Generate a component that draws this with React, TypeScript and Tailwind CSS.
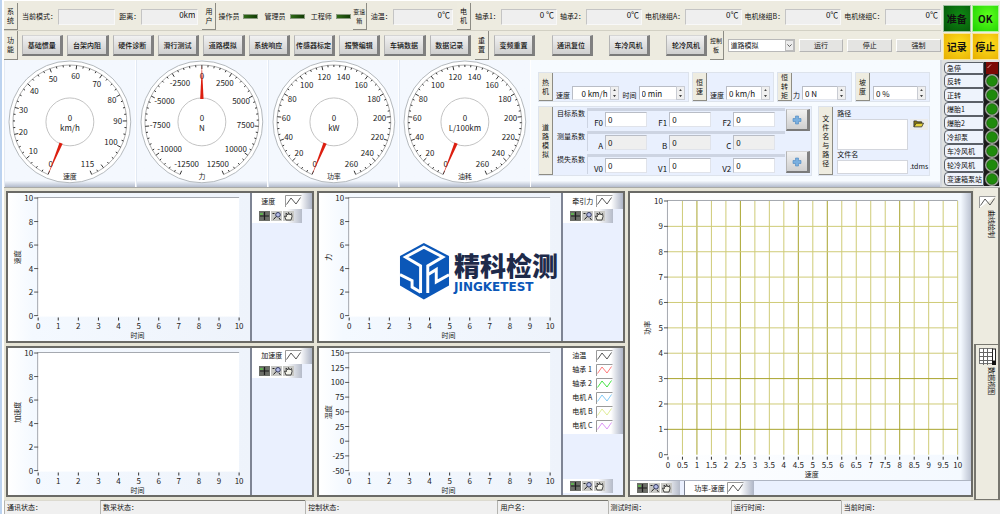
import React, { useState } from "react";
import clsx from "clsx";

const MODES = ["基础惯量", "台架内阻", "硬件诊断", "滑行测试", "道路模拟", "系统响应", "传感器标定", "报警编辑", "车辆数据", "数据记录"];
const RESETS = ["变频重置", "通讯复位", "车冷风机", "轮冷风机"];
const TEMPS = [
  { label: "轴承1：", value: "0 ℃" },
  { label: "轴承2：", value: "0℃" },
  { label: "电机绕组A：", value: "0℃" },
  { label: "电机绕组B：", value: "0℃" },
  { label: "电机绕组C：", value: "0℃" },
];
const SIGNALS = ["急停", "反转", "正转", "爆胎1", "爆胎2", "冷却泵", "车冷风机", "轮冷风机", "变速箱泵站"];
const COEFFS = [
  { title: "目标系数", names: ["F0", "F1", "F2"], readOnly: false },
  { title: "测量系数", names: ["A", "B", "C"], readOnly: true },
  { title: "损失系数", names: ["V0", "V1", "V2"], readOnly: false },
];
const TEMP_LINES = [
  { label: "油温", color: "#444444" },
  { label: "轴承 1", color: "#ff6b6b" },
  { label: "轴承 2", color: "#2fe02f" },
  { label: "电机 A", color: "#74c4f5" },
  { label: "电机 B", color: "#dbe98a" },
  { label: "电机 C", color: "#d98af5" },
];

const range = (from: number, to: number, step: number) => {
  const out: number[] = [];
  for (let v = from; v <= to; v += step) out.push(v);
  return out;
};

function SideLabel({ text, className }: { text: string; className?: string }) {
  return (
    <div
      className={clsx(
        "flex w-[14px] shrink-0 flex-wrap content-center justify-center self-stretch border-r border-b border-[#8d8c84] bg-[#eeece0] text-center whitespace-normal",
        className
      )}
    >
      {text.split("").map((ch, i) => (
        <span key={i}>{ch}</span>
      ))}
    </div>
  );
}

function ReadField({ label, value }: { label: string; value: string }) {
  return (
    <label className="flex flex-auto items-center gap-px">
      {label}
      <input
        readOnly
        value={value}
        className="h-4 w-[50px] min-w-0 flex-auto border border-t-[#c4c4c4] border-r-[#f8f8f8] border-b-[#f8f8f8] border-l-[#c4c4c4] bg-[#efefef] px-0.5 pb-1 text-right text-[8px]"
      />
    </label>
  );
}

function BevelButton({ children, className, ...rest }: React.ButtonHTMLAttributes<HTMLButtonElement>) {
  return (
    <button
      {...rest}
      className={clsx(
        "flex items-center justify-center border-t border-r-3 border-b-2 border-l border-t-[#d5d5d5] border-r-[#808080] border-b-[#7a7a7a] border-l-[#b5b5b5] bg-linear-to-b from-[#f1f1f1] to-[#cfcfcf]",
        className
      )}
    >
      {children}
    </button>
  );
}

function FlatButton({ children }: { children: string }) {
  return (
    <button className="h-[13px] flex-1 border border-t-white border-r-[#b5b5b5] border-b-[#b5b5b5] border-l-white bg-[#e4e4e2]">
      {children}
    </button>
  );
}

function Led({ label }: { label: string }) {
  return (
    <div className="flex items-center gap-1">
      {label}
      <span className="h-[5px] w-[15px] border border-[#8a9a80] bg-linear-to-r from-[#2f6a16] to-[#123c05]" />
    </div>
  );
}

function Tile({ children, className }: { children: string; className: string }) {
  return (
    <button className={clsx("h-[27px] border border-white/60 text-[10px] font-bold text-[#111]", className)}>
      {children}
    </button>
  );
}

function Header() {
  return (
    <header className="flex gap-0.5 bg-[#edebe0] pt-0.5">
      <div className="min-w-0 flex-1">
        <div className="grid h-7 grid-cols-[14px_184fr_14px_136fr_14px_90fr_14px_469fr] items-center border-b border-[#d2d0c4]">
          <SideLabel text="系统" />
          <div className="flex gap-1 px-1">
            <ReadField label="当前模式：" value="" />
            <ReadField label="距离：" value="0km" />
          </div>
          <SideLabel text="用户" />
          <div className="flex justify-between px-0.5">
            <Led label="操作员" />
            <Led label="管理员" />
            <Led label="工程师" />
          </div>
          <SideLabel text="变速箱" className="text-[6px]" />
          <div className="flex px-1">
            <ReadField label="油温：" value="0℃" />
          </div>
          <SideLabel text="电机" />
          <div className="flex gap-[3px] pl-1">
            {TEMPS.map((t) => (
              <ReadField key={t.label} {...t} />
            ))}
          </div>
        </div>
        <div className="grid h-[29px] grid-cols-[14px_456fr_15px_219fr_14px_217fr] items-center">
          <SideLabel text="功能" />
          <div className="grid grid-cols-10 gap-1 px-1">
            {MODES.map((m) => (
              <BevelButton key={m} className="h-[21px] font-medium">
                {m}
              </BevelButton>
            ))}
          </div>
          <SideLabel text="重置" />
          <div className="flex justify-between pr-0.5 pl-1">
            {RESETS.map((m) => (
              <BevelButton key={m} className="h-[21px] w-[41px] font-medium">
                {m}
              </BevelButton>
            ))}
          </div>
          <SideLabel text="控制板" className="text-[6px]" />
          <div className="flex items-center gap-1 pl-1">
            <div className="relative w-[67px]">
              <select aria-label="模式" className="h-[13px] w-full appearance-none border border-[#b9b9b9] bg-white pl-0.5 text-[7px]">
                <option>道路模拟</option>
              </select>
              <span className="pointer-events-none absolute inset-y-px right-px flex w-[9px] items-center justify-center border border-[#bcbcbc] bg-[#ececec]">
                <svg viewBox="0 0 6 4" className="w-[5px]">
                  <path d="M0.5 0.5 L3 3 L5.5 0.5" fill="none" stroke="#444" />
                </svg>
              </span>
            </div>
            <FlatButton>运行</FlatButton>
            <FlatButton>停止</FlatButton>
            <FlatButton>强制</FlatButton>
          </div>
        </div>
      </div>
      <div className="grid w-[57px] grid-cols-2 gap-px pt-0.5 pr-px">
        <Tile className="bg-radial-[at_60%_40%] from-[#108a14] to-[#045508]">准备</Tile>
        <Tile className="bg-radial-[at_60%_40%] from-[#5dff1c] to-[#1fd003]">OK</Tile>
        <Tile className="bg-radial-[at_60%_40%] from-[#ffe01f] to-[#e6ae00]">记录</Tile>
        <Tile className="bg-radial-[at_60%_40%] from-[#ffe01f] to-[#e6ae00]">停止</Tile>
      </div>
    </header>
  );
}

type GaugeProps = { min: number; max: number; step: number; minor: number; labels: number[]; unit: string; name: string };

// The scale runs clockwise through 315 degrees and is open at the bottom.
function Gauge({ min, max, minor, step, labels, unit, name }: GaugeProps) {
  const toRad = (v: number) => ((-157.5 + ((v - min) / (max - min)) * 315) * Math.PI) / 180;
  const needle = (toRad(0) * 180) / Math.PI;
  return (
    <div className="flex-1 border-r border-r-white border-l border-l-[#e2e9f3] bg-linear-to-b from-[#f4f8fe] from-95% to-[#b4bccd]">
      <svg viewBox="0 0 130 127" className="w-full" fontSize="8" textAnchor="middle" fill="#222">
        <circle cx="65" cy="62" r="61" fill="#fff" stroke="#b4b9bd" />
        <g transform="translate(65 62)">
          <path d="M-21.8 52.7 A57 57 0 1 1 21.8 52.7" fill="none" stroke="#8b8b8b" strokeWidth="0.7" />
          {range(min, max, minor).map((v) => {
            const a = toRad(v);
            const inner = v % step === 0 || v === max ? 53 : 55;
            return (
              <line
                key={v}
                x1={Math.sin(a) * 57}
                y1={-Math.cos(a) * 57}
                x2={Math.sin(a) * inner}
                y2={-Math.cos(a) * inner}
                stroke="#333"
                strokeWidth="1"
              />
            );
          })}
          <circle r="24" fill="none" stroke="#c3c3c3" />
          {labels.map((v) => {
            const a = toRad(v);
            const half = String(v).length * 2;
            return (
              <text key={v} x={Math.sin(a) * (52 - half)} y={-Math.cos(a) * 46 + 3}>
                {v}
              </text>
            );
          })}
          <path d="M-1.7 -23 L0 -57 L1.7 -23 Z" fill="#dc1f10" transform={`rotate(${needle})`} />
          <text y="-1">0</text>
          <text y="9">{unit}</text>
          <text y="57" fontSize="7">
            {name}
          </text>
        </g>
      </svg>
    </div>
  );
}

function Spin({ label, value, right }: { label: string; value: string; right?: boolean }) {
  return (
    <div className="flex flex-auto items-end gap-0.5">
      {label && <span>{label}</span>}
      <div className="flex flex-auto">
        <input
          aria-label={label || "坡度"}
          defaultValue={value}
          className={clsx(
            "h-[14px] w-[20px] min-w-0 flex-auto border border-t-[#b9bdc6] border-r-0 border-b-[#e4e7ee] border-l-[#b9bdc6] bg-white px-0.5 text-[8px]",
            right && "text-right"
          )}
        />
        <div className="flex h-[14px] w-[9px] flex-col border border-[#c9ccd3] bg-[#f0f0f0]">
          <button aria-label="增加" className="flex flex-1 items-center justify-center">
            <svg viewBox="0 0 4 3" className="w-[3px]"><path d="M0 3 L2 0 L4 3Z" fill="#444" /></svg>
          </button>
          <button aria-label="减少" className="flex flex-1 items-center justify-center">
            <svg viewBox="0 0 4 3" className="w-[3px]"><path d="M0 0 L2 3 L4 0Z" fill="#444" /></svg>
          </button>
        </div>
      </div>
    </div>
  );
}

function Group({ title, children }: { title: string; children: React.ReactNode }) {
  return (
    <div className="flex min-w-0 border border-[#dde3ec] bg-[#e9f0fe]">
      <SideLabel text={title} />
      {children}
    </div>
  );
}

function PlusButton() {
  return (
    <BevelButton aria-label="添加" className="h-[22px] w-6">
      <svg viewBox="0 0 10 10" className="size-[10px]">
        <path d="M3.5 1 H6.5 V3.5 H9 V6.5 H6.5 V9 H3.5 V6.5 H1 V3.5 H3.5Z" fill="#79afe0" stroke="#4c86c0" strokeWidth="0.6" />
      </svg>
    </BevelButton>
  );
}

function Settings() {
  return (
    <section className="flex w-[411px] flex-col gap-1.5 border-r-2 border-r-[#d3d7dd] bg-linear-to-b from-[#f7fbff] from-95% to-[#b4bccd] pt-3 pr-2.5 pl-[7px]">
      <div className="grid h-7 grid-cols-[151fr_82fr_75fr_75fr] gap-[3px]">
        <Group title="热机">
          <div className="flex flex-1 items-end gap-1 px-[3px] pb-px">
            <Spin label="速度" value="0 km/h" right />
            <Spin label="时间" value="0 min" />
          </div>
        </Group>
        <Group title="恒速">
          <div className="flex flex-1 items-end px-[3px] pb-px">
            <Spin label="速度" value="0 km/h" />
          </div>
        </Group>
        <Group title="恒转矩">
          <div className="flex flex-1 items-end pr-[5px] pb-px pl-px">
            <Spin label="力" value="0 N" />
          </div>
        </Group>
        <Group title="坡度">
          <div className="flex flex-1 items-end pr-[3px] pb-px pl-[3px]">
            <Spin label="" value="0 %" />
          </div>
        </Group>
      </div>
      <div className="grid h-[70px] grid-cols-[275fr_112fr] gap-[6px]">
        <Group title="道路模拟">
          <div className="flex flex-1 flex-col justify-around pl-1">
            {COEFFS.map((row) => (
              <div key={row.title} className="flex">
                <span className="w-[30px] pt-px">{row.title}</span>
                <div className="flex flex-1 justify-between border-t-3 border-l border-t-[#cdd4e2] border-l-[#cdd4e2] py-px pr-2.5 pl-1">
                  {row.names.map((n) => (
                    <label key={n} className="flex items-end gap-0.5 text-[8px]">
                      <span className="w-[11px] text-right">{n}</span>
                      <input
                        defaultValue="0"
                        readOnly={row.readOnly}
                        className={clsx(
                          "h-[15px] w-[42px] border border-t-[#b9bdc6] border-r-[#e0e3ea] border-b-[#e0e3ea] border-l-[#b9bdc6] px-0.5 text-[8px]",
                          row.readOnly ? "bg-[#efefef]" : "bg-white"
                        )}
                      />
                    </label>
                  ))}
                </div>
              </div>
            ))}
          </div>
          <div className="flex flex-col justify-between px-px py-0.5">
            <PlusButton />
            <PlusButton />
          </div>
        </Group>
        <Group title="文件名与路径">
          <div className="flex min-w-0 flex-1 flex-col justify-between pr-px pb-px pl-1">
            <label htmlFor="path" className="pt-0.5">路径</label>
            <div className="flex items-start gap-0.5">
              <textarea id="path" className="h-[31px] w-0 min-w-0 flex-1 resize-none border border-[#d3d6dd] bg-white" />
              <button aria-label="打开" className="flex h-[11px] w-[18px] items-center justify-center bg-[#ececec]">
                <svg viewBox="0 0 12 8" className="w-[11px]">
                  <path d="M1 7.5 V1 H4 L5 2 H9.5 V3.5" fill="#8a7a10" stroke="#222" strokeWidth="0.8" />
                  <path d="M1 7.5 L3.5 3.5 H11.5 L9.5 7.5Z" fill="#e6d23a" stroke="#222" strokeWidth="0.8" />
                </svg>
              </button>
            </div>
            <label htmlFor="file">文件名</label>
            <div className="flex items-center gap-0.5">
              <input id="file" className="h-[14px] w-0 min-w-0 flex-1 border border-[#d3d6dd] bg-white" />
              <span className="w-[18px]">.tdms</span>
            </div>
          </div>
        </Group>
      </div>
    </section>
  );
}

function Signals() {
  return (
    <ul className="flex w-[58px] flex-col justify-between bg-[#dfe1e0] pt-0.5 pr-px pb-px pl-0.5">
      {SIGNALS.map((name, i) => (
        <li key={name} className="flex flex-1">
          <span className="flex flex-1 items-center rounded-l-sm border border-[#5b6068] bg-[#eef3fc] pl-0.5">{name}</span>
          <span className="flex w-[15px] items-center justify-center bg-[#1b1b1b]">
            {i === 0 ? (
              <svg viewBox="0 0 12 12" className="size-3">
                <rect width="12" height="12" fill="#7c0b06" />
                <path d="M1.5 6 L5 2.5" stroke="#e9a09c" strokeWidth="1" />
              </svg>
            ) : (
              <svg viewBox="0 0 14 14" className="w-[14px]">
                <circle cx="7" cy="7" r="7" fill="#a3a79f" />
                <circle cx="7" cy="7" r="5.3" fill="#1f8a0c" stroke="#165c08" strokeWidth="0.6" />
              </svg>
            )}
          </span>
        </li>
      ))}
    </ul>
  );
}

function Wave({ color = "#444444", className }: { color?: string; className?: string }) {
  return (
    <svg viewBox="0 0 17 12" className={clsx("w-[17px]", className)}>
      <path d="M0.5 12 V0.5 H16.5" fill="#fff" stroke="#9a9a9a" />
      <path d="M1.5 9.5 L6 3 L11 9 L15.5 2.5" fill="none" stroke={color} strokeWidth="0.9" />
    </svg>
  );
}

function PlotTools({ className }: { className?: string }) {
  return (
    <div
      className={clsx(
        "flex h-[14px] w-[50px] items-center gap-px bg-linear-to-r from-white from-70% to-[#b5bbc9] pl-[7px]",
        className
      )}
    >
      <button aria-label="光标">
        <svg viewBox="0 0 11 10" className="w-[11px]">
          <rect width="11" height="10" fill="#6c6e68" />
          <path d="M5.5 1 V9 M1 5 H10" stroke="#1c1c1c" strokeWidth="1.2" />
          <rect x="1" y="2" width="3" height="2" fill="#5fae4f" />
        </svg>
      </button>
      <button aria-label="缩放">
        <svg viewBox="0 0 11 10" className="w-[11px]">
          <rect width="11" height="10" fill="#c9c9c5" />
          <circle cx="7" cy="3.8" r="2.3" fill="#b3bbe6" stroke="#343a60" />
          <path d="M5.2 5.5 L2.5 8.5 M8 7 L9.5 9 M1.5 2.5 H3.5" stroke="#222" />
        </svg>
      </button>
      <button aria-label="平移">
        <svg viewBox="0 0 11 10" className="w-[11px]">
          <rect width="11" height="10" fill="#c9c9c5" />
          <path d="M3 9 L1.5 5 L3.5 5.5 L3 2 L5 4 L5.5 1.5 L7 4 L8.5 2.5 L9 5.5 L8 9Z" fill="#f3f3ea" stroke="#333" strokeWidth="0.9" />
        </svg>
      </button>
    </div>
  );
}

function LegendRow({ label, color }: { label: string; color?: string }) {
  return (
    <div className="flex h-[14px] items-center justify-between pr-2.5 pl-[9px]">
      {label}
      <Wave color={color} />
    </div>
  );
}

type PlotProps = { yName: string; yTicks: number[]; lines: { label: string; color?: string }[]; toolsAtBottom?: boolean };

function TimePlot({ yName, yTicks, lines, toolsAtBottom }: PlotProps) {
  const top = 5;
  const bottom = 122;
  const low = yTicks[0];
  const high = yTicks[yTicks.length - 1];
  const y = (v: number) => bottom - ((v - low) / (high - low)) * (bottom - top);
  return (
    <div className="flex border-2 border-[#6a6a66] bg-[#eaf0fe]">
      <div className="min-w-0 flex-1 border-r-2 border-[#7e8494] bg-linear-to-r from-white via-[#f4f9ff] via-10% to-[#eef3fb]">
        <svg viewBox="0 0 241 147" className="w-full" fontSize="8" fill="#222" textAnchor="middle">
          <rect x="30" y={top} width="200" height={bottom - top + 1} fill="#fff" />
          <path d={`M230 ${top - 0.5} H29.5 V${bottom}`} fill="none" stroke="#a5a9b0" />
          {yTicks.map((v) => (
            <g key={v}>
              <line x1="26" x2="30" y1={y(v)} y2={y(v)} stroke="#555" />
              <text x="25" y={y(v) + 3} textAnchor="end">{v}</text>
            </g>
          ))}
          {range(0, 10, 1).map((v) => (
            <g key={v}>
              <line x1={30 + v * 20} x2={30 + v * 20} y1="124" y2="127" stroke="#333" />
              <text x={30 + v * 20} y="135">{v}</text>
            </g>
          ))}
          <text x="129" y="144" fontSize="7">时间</text>
          <text transform="translate(12 64) rotate(-90)" fontSize="7">{yName}</text>
        </svg>
      </div>
      <div className="flex w-[60px] flex-col items-start">
        <div className="w-full bg-linear-to-r from-white from-80% to-[#aeb5c6] py-px">
          {lines.map((l) => (
            <LegendRow key={l.label} {...l} />
          ))}
        </div>
        <PlotTools className={toolsAtBottom ? "mt-auto mb-0.5" : ""} />
      </div>
    </div>
  );
}

const STRONG_X = [1, 2.5, 4.5, 5.5, 8];
const STRONG_Y = [1, 3];

function PowerPlot() {
  const x = (v: number) => 38 + v * 29;
  const y = (v: number) => 262 - v * 25.4;
  return (
    <div className="flex flex-col border-2 border-[#6a6a66] bg-[#eaf0fe]">
      <div className="flex-1 border-b border-[#aeb4c2] bg-linear-to-r from-white from-1% via-[#f4f9ff] via-97% to-[#bcc3d2]">
        <svg viewBox="0 0 341 286" className="w-full" fontSize="8" fill="#222" textAnchor="middle">
          <rect x="38" y="8" width="290" height="254" fill="#fff" />
          {range(0.5, 10, 0.5).map((v) => (
            <line key={v} x1={x(v)} x2={x(v)} y1="8" y2="262" stroke={STRONG_X.includes(v) ? "#a9a42c" : "#cfcb76"} />
          ))}
          {range(1, 9, 1).map((v) => (
            <line key={v} x1="38" x2="328" y1={y(v)} y2={y(v)} stroke={STRONG_Y.includes(v) ? "#a9a42c" : "#cfcb76"} />
          ))}
          <path d="M328 7.5 H37.5 V262" fill="none" stroke="#a5a9b0" />
          {range(0, 10, 1).map((v) => (
            <g key={v}>
              <line x1="34" x2="38" y1={y(v)} y2={y(v)} stroke="#555" />
              <text x="33" y={y(v) + 3} textAnchor="end">{v}</text>
            </g>
          ))}
          {range(0, 10, 0.5).map((v) => (
            <g key={v}>
              <line x1={x(v)} x2={x(v)} y1="264" y2="267" stroke="#333" />
              <text x={x(v)} y="275">{v}</text>
            </g>
          ))}
          <text x="182" y="284" fontSize="7">速度</text>
          <text transform="translate(20 135) rotate(-90)" fontSize="7">功率</text>
        </svg>
      </div>
      <div className="flex gap-1">
        <PlotTools />
        <div className="w-[70px] border-l border-[#7e8494] bg-linear-to-r from-white from-80% to-[#aeb5c6]">
          <LegendRow label="功率-速度" />
        </div>
      </div>
    </div>
  );
}

function SideTabs() {
  const [active, setActive] = useState(1);
  const tabs = [
    { name: "曲线绘制", icon: <Wave /> },
    {
      name: "数据视图",
      icon: (
        <svg viewBox="0 0 17 17" className="w-[17px]">
          <rect x="0.5" y="0.5" width="13" height="15" fill="#fff" stroke="#777" />
          <path d="M0 4.5 H14 M0 8.5 H14 M0 12.5 H14 M4.5 0 V17 M8.5 0 V17" stroke="#666" />
          <rect x="13.5" y="1" width="3" height="12" fill="#fff" stroke="#222" />
          <rect x="13" y="13" width="4" height="4" fill="#111" />
        </svg>
      ),
    },
  ];
  return (
    <div className="grid w-[26px] grid-rows-2">
      {tabs.map((t, i) => (
        <button
          key={t.name}
          onClick={() => setActive(i)}
          className={clsx(
            "flex flex-col items-end gap-0.5 border-r-2 border-[#77766f] bg-[#edebe0] pr-0.5",
            active === i ? "border-t border-b border-l-2 pt-[3px]" : "pt-2"
          )}
        >
          {t.icon}
          <span className="[text-orientation:sideways] [writing-mode:vertical-rl]">{t.name}</span>
        </button>
      ))}
    </div>
  );
}

function Watermark() {
  return (
    <div className="pointer-events-none absolute top-[54px] left-[395px] flex items-center gap-1">
      <svg viewBox="252 162 156 180" className="w-[51px]">
        <path d="M328 165 L405 205 V295 L328 338 L255 295 V205Z" fill="#0b57b8" />
        <path d="M318 318 V235 L272 208 L328 178 L386 208 L340 235 V318" fill="none" stroke="#fff" strokeWidth="9" />
        <path d="M255 262 L292 280 V300 L318 316" fill="none" stroke="#fff" strokeWidth="9" />
        <path d="M340 262 L366 246 V284 L405 262" fill="none" stroke="#fff" strokeWidth="9" />
      </svg>
      <div>
        <div className="text-[26px] leading-[32px] font-black text-[#1e2a4a]">精科检测</div>
        <div className="font-['DejaVu_Sans'] text-[12px] leading-[12px] font-bold text-[#0b57b8]">JINGKETEST</div>
      </div>
    </div>
  );
}

function StatusBar() {
  const cells = ["通讯状态：", "数采状态：", "控制状态：", "用户名：", "测试时间：", "运行时间：", "当前时间："];
  return (
    <footer className="grid grid-cols-[96fr_205fr_192fr_110fr_123fr_110fr_159fr] bg-[#f0f0f0]">
      {cells.map((c, i) => (
        <div
          key={c}
          className={clsx("h-[14px] border-t border-l border-l-[#b4b4b0] pt-0.5 pl-0.5", i % 2 ? "border-t-[#77766f]" : "border-t-[#dcdad0]")}
        >
          {c}
        </div>
      ))}
    </footer>
  );
}

export default function App() {
  const power = range(0, 260, 20);
  return (
    <div className="border-l-2 border-[#bcd3f0] bg-white pt-px pl-0.5 font-['Noto_Sans_CJK_SC','Open_Sans',sans-serif] text-[7px] leading-[9px] whitespace-nowrap text-[#111]">
      <Header />
      <div className="flex border-b border-[#a9aaa6]">
        <div className="flex min-w-0 flex-1 bg-[#f4f8fe]">
          <Gauge min={0} max={115} step={10} minor={2.5} labels={[...range(0, 100, 10), 115]} unit="km/h" name="速度" />
          <Gauge min={-12500} max={12500} step={2500} minor={500} labels={range(-12500, 12500, 2500)} unit="N" name="力" />
          <Gauge min={0} max={260} step={20} minor={5} labels={power} unit="kW" name="功率" />
          <Gauge min={0} max={260} step={20} minor={5} labels={power} unit="L/100km" name="油耗" />
        </div>
        <Settings />
        <Signals />
      </div>
      <main className="relative flex gap-px bg-[#e6e4d6]">
        <div className="grid min-w-0 flex-1 grid-cols-[620fr_345fr] gap-[3px] py-[3px] pl-0.5">
          <div className="grid grid-cols-2 gap-[3px]">
            <TimePlot yName="速度" yTicks={range(0, 10, 2)} lines={[{ label: "速度" }]} />
            <TimePlot yName="力" yTicks={range(0, 10, 2)} lines={[{ label: "牵引力" }]} />
            <TimePlot yName="加速度" yTicks={range(0, 10, 2)} lines={[{ label: "加速度" }]} />
            <TimePlot yName="温度" yTicks={range(-50, 150, 25)} lines={TEMP_LINES} toolsAtBottom />
          </div>
          <PowerPlot />
        </div>
        <SideTabs />
        <Watermark />
      </main>
      <StatusBar />
    </div>
  );
}
